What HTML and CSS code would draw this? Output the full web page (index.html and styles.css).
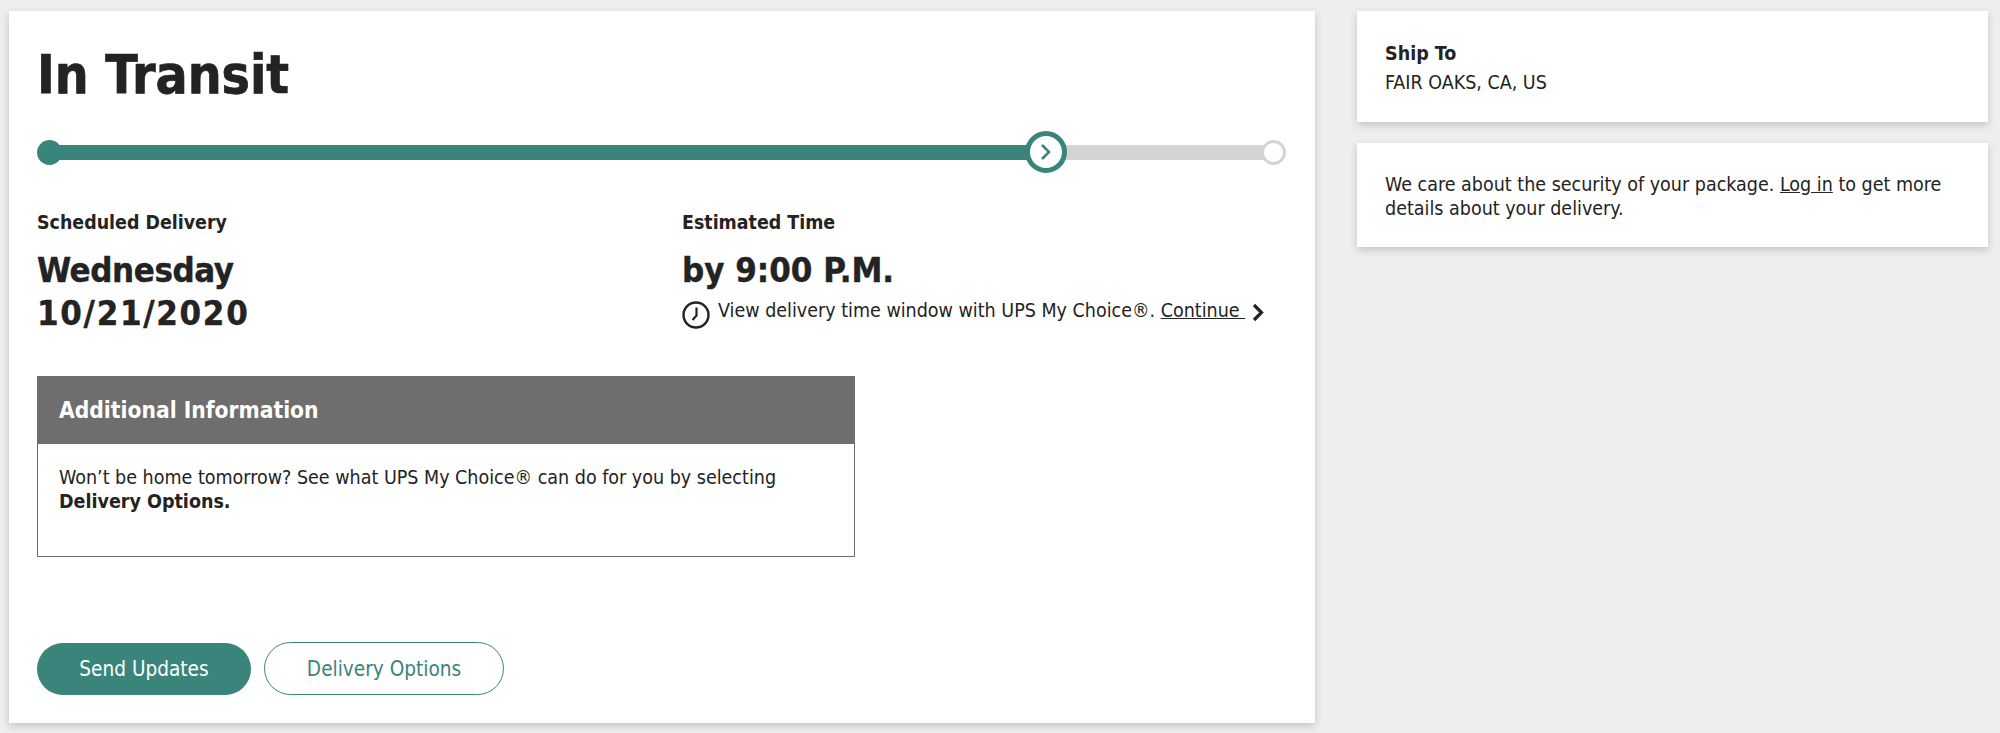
FILE: index.html
```html
<!DOCTYPE html>
<html lang="en">
<head>
<meta charset="utf-8">
<title>In Transit</title>
<link rel="stylesheet" href="styles.css">
</head>
<body>
<main class="card main">
  <h1 class="title">In Transit</h1>
  <div class="progress">
    <div class="fill"></div>
    <span class="dot"></span>
    <span class="current"><svg width="14" height="18" viewBox="0 0 14 18"><path d="M3 2l7 7-7 7" fill="none" stroke="#3a857b" stroke-width="2.6"/></svg></span>
    <span class="end"></span>
  </div>
  <div class="cols">
    <section class="col-a">
      <h2 class="label">Scheduled Delivery</h2>
      <p class="big"><span class="day">Wednesday</span><br><span class="date">10/21/2020</span></p>
    </section>
    <section class="col-b">
      <h2 class="label">Estimated Time</h2>
      <p class="big">by 9:00 P.M.</p>
      <p class="window">
        <svg class="clock" width="28" height="28" viewBox="0 0 28 28"><circle cx="14" cy="14" r="12.5" fill="none" stroke="#232323" stroke-width="2.4"/><path d="M14.5 6.5V14.5L10.5 19" fill="none" stroke="#232323" stroke-width="2.2"/></svg>
        <span>View delivery time window with UPS My Choice®. <a href="#">Continue&nbsp;</a></span>
        <svg class="chev" width="13" height="19" viewBox="0 0 13 19"><path d="M2 2l7.5 7.5-7.5 7.5" fill="none" stroke="#232323" stroke-width="3.2"/></svg>
      </p>
    </section>
  </div>
  <section class="info">
    <h3 class="info-head">Additional Information</h3>
    <p class="info-body">Won’t be home tomorrow? See what UPS My Choice® can do for you by selecting <b>Delivery Options.</b></p>
  </section>
  <div class="actions">
    <a class="btn solid" href="#">Send Updates</a>
    <a class="btn ghost" href="#">Delivery Options</a>
  </div>
</main>
<aside class="side">
  <div class="card ship"><h2 class="ship-label">Ship To</h2>FAIR OAKS, CA, US</div>
  <div class="card note">We care about the security of your package. <a href="#">Log in</a> to get more details about your delivery.</div>
</aside>
</body>
</html>
```
FILE: styles.css
```css
* { box-sizing: border-box; }
html, body { margin: 0; height: 733px; overflow: hidden; }
body {
  background: #eeeeec;
  color: #232323;
  font-family: "DejaVu Sans", Verdana, sans-serif;
  font-stretch: condensed;
  font-size: 19.5px;
  line-height: 24px;
  display: flex;
  gap: 42px;
  padding: 11px 0 0 9px;
}
a { color: inherit; }
.card { background: #fff; box-shadow: 0 3px 8px rgba(0,0,0,.18); }
.main { width: 1306px; height: 712px; padding: 0 28px; display: flex; flex-direction: column; }
.title { margin: 34px 0 0; font-size: 53px; line-height: 60px; font-weight: 700; -webkit-text-stroke: .7px #232323; }
.progress { position: relative; margin-top: 26px; width: 1250px; height: 43px; }
.progress::before { content: ""; position: absolute; left: 10px; right: 10px; top: 14px; height: 15px; background: #d4d4d4; }
.fill { position: absolute; left: 10px; top: 14px; height: 15px; width: 990px; background: #3a857b; }
.dot { position: absolute; left: 0; top: 9px; width: 25px; height: 25px; border-radius: 50%; background: #3a857b; }
.current { position: absolute; left: 988px; top: 0; width: 42px; height: 42px; border-radius: 50%; background: #fff; border: 5px solid #3a857b; display: flex; align-items: center; justify-content: center; }
.end { position: absolute; left: 1224px; top: 9px; width: 25px; height: 25px; border-radius: 50%; background: #fff; border: 3px solid #d4d4d4; }
.cols { display: flex; margin-top: 37px; height: 160px; }
.col-a { width: 645px; }
.col-b { flex: 1; }
.label { margin: 0; font-size: 19.4px; line-height: 24px; font-weight: 700; }
.big { margin: 14px 0 0; font-size: 34.5px; line-height: 43px; font-weight: 700; -webkit-text-stroke: .4px #232323; }
.day { letter-spacing: -.4px; }
.date { letter-spacing: 1.7px; }
.window { margin: 7px 0 0; display: flex; align-items: flex-start; height: 28px; }
.clock { margin-top: 2px; margin-right: 8px; flex: none; }
.window span { white-space: nowrap; }
.chev { margin: 4px 0 0 7px; flex: none; }
.info { width: 818px; height: 181px; margin-top: 5px; border: 1px solid #6e6e6e; }
.info-head { margin: 0; height: 67px; padding: 0 21px; background: #6e6e6e; color: #fff; font-size: 22.6px; line-height: 67px; font-weight: 700; }
.info-body { margin: 0; padding: 22px 21px 0; }
.actions { display: flex; align-items: center; gap: 13px; margin-top: 85px; }
.btn { display: flex; align-items: center; justify-content: center; border-radius: 27px; text-decoration: none; font-size: 20.6px; }
.solid { width: 214px; height: 52px; background: #3a857b; color: #fff; }
.ghost { width: 240px; height: 53px; background: #fff; color: #3a857b; border: 1.5px solid #3a857b; }
.side { width: 631px; display: flex; flex-direction: column; gap: 21px; }
.ship { height: 111px; padding: 25px 28px 0; }
.ship-label { margin: 0; font-size: 19.5px; line-height: 35px; font-weight: 700; }
.note { height: 104px; padding: 30px 28px 0; }
```
